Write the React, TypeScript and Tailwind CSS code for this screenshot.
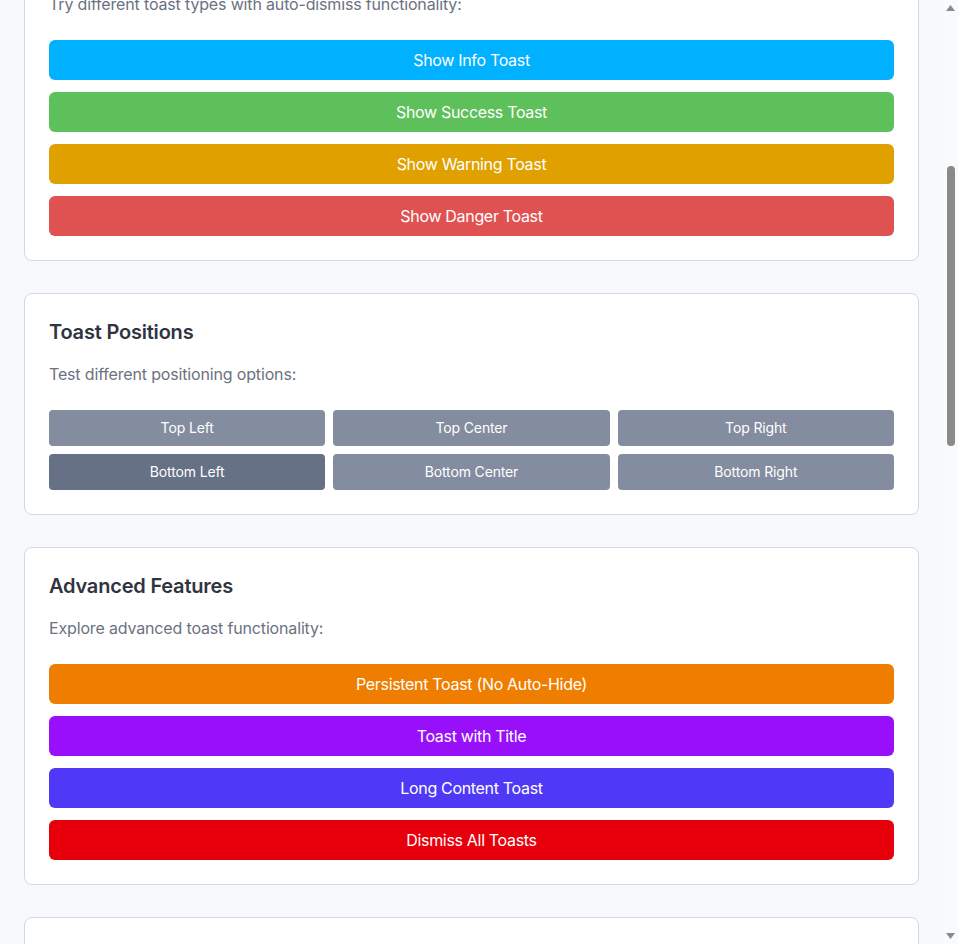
import React from 'react';

const basicToasts = [
  { label: 'Show Info Toast', color: 'bg-[#00b1ff]' },
  { label: 'Show Success Toast', color: 'bg-[#5dc05b]' },
  { label: 'Show Warning Toast', color: 'bg-[#e0a100]' },
  { label: 'Show Danger Toast', color: 'bg-[#e05252]' },
];

const positions = [
  { label: 'Top Left', active: false },
  { label: 'Top Center', active: false },
  { label: 'Top Right', active: false },
  { label: 'Bottom Left', active: true },
  { label: 'Bottom Center', active: false },
  { label: 'Bottom Right', active: false },
];

const advanced = [
  { label: 'Persistent Toast (No Auto-Hide)', color: 'bg-[#ef7d00]' },
  { label: 'Toast with Title', color: 'bg-[#9810fa]' },
  { label: 'Long Content Toast', color: 'bg-[#4f39f6]' },
  { label: 'Dismiss All Toasts', color: 'bg-[#e7000b]' },
];

function Card({ title, description, children }: { title: string; description: string; children: React.ReactNode }) {
  return (
    <section className="bg-white border border-[#cfd8e4] rounded-lg p-6">
      <h2 className="text-xl leading-7 font-semibold text-[#2f3440] mb-4 tracking-[-0.01em]">{title}</h2>
      <p className="text-base leading-6 text-[#6b7280] mb-6 tracking-[-0.01em]">{description}</p>
      {children}
    </section>
  );
}

function ColorButtons({ items }: { items: { label: string; color: string }[] }) {
  return (
    <div className="flex flex-col gap-3">
      {items.map((item) => (
        <button
          key={item.label}
          className={`${item.color} h-10 w-full rounded-md text-white text-base tracking-[-0.02em]`}
        >
          {item.label}
        </button>
      ))}
    </div>
  );
}

// the window's scrollbar, as it shows in the shot
function Scrollbar() {
  return (
    <div className="fixed top-0 right-0 h-screen w-[15px] bg-[#f9fafb] flex flex-col items-center justify-between py-[5px]">
      <svg width="9" height="6" viewBox="0 0 9 6">
        <path d="M4.5 0 L9 6 L0 6 Z" fill="#8a8a8a" />
      </svg>
      <div className="flex-1 w-full flex flex-col items-center">
        <div className="h-[155px]" />
        <div className="w-[8px] h-[280px] rounded-full bg-[#8a8a8a]" />
      </div>
      <svg width="9" height="6" viewBox="0 0 9 6">
        <path d="M0 0 L9 0 L4.5 6 Z" fill="#8a8a8a" />
      </svg>
    </div>
  );
}

export default function App() {
  return (
    <div
      className="h-screen overflow-hidden bg-[#f8f9fb]"
      style={{ fontFamily: 'Inter, "Noto Sans", sans-serif' }}
    >
      <div className="mr-[15px] px-6">
        <div className="flex flex-col gap-8 -mt-[77px]">
          <Card title="Toast Types" description="Try different toast types with auto-dismiss functionality:">
            <ColorButtons items={basicToasts} />
          </Card>

          <Card title="Toast Positions" description="Test different positioning options:">
            <div className="grid grid-cols-3 gap-2">
              {positions.map((p) => (
                <button
                  key={p.label}
                  className={`${p.active ? 'bg-[#667185]' : 'bg-[#838d9f]'} h-9 rounded text-white text-sm tracking-[-0.01em]`}
                >
                  {p.label}
                </button>
              ))}
            </div>
          </Card>

          <Card title="Advanced Features" description="Explore advanced toast functionality:">
            <ColorButtons items={advanced} />
          </Card>

          <section className="bg-white border border-[#cfd8e4] rounded-lg h-[200px]" />
        </div>
      </div>
      <Scrollbar />
    </div>
  );
}
